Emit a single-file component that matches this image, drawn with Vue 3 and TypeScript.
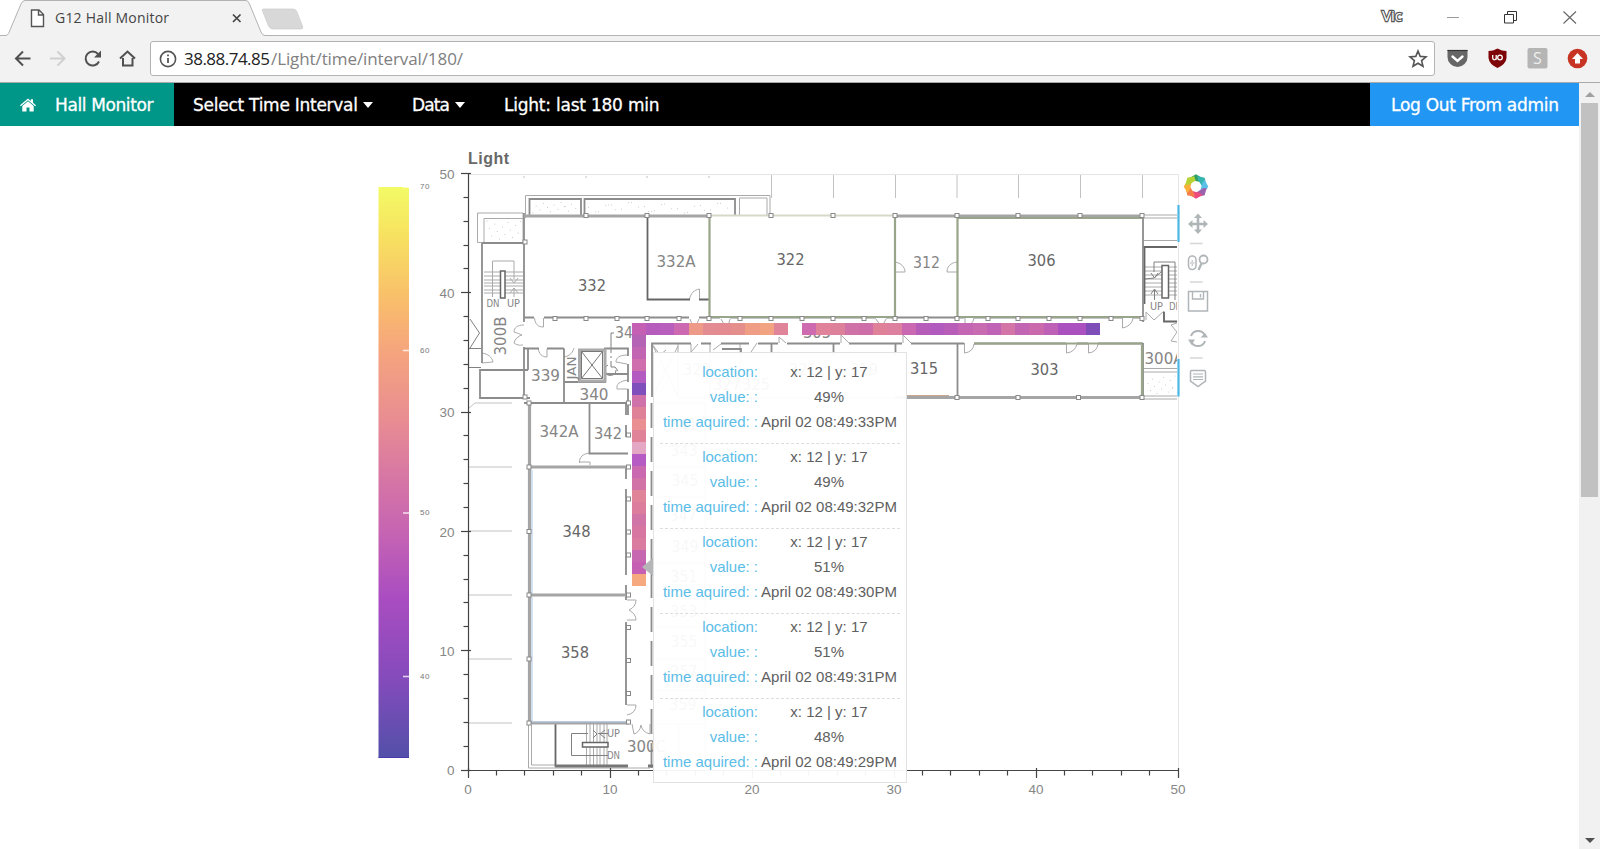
<script setup lang="ts">
interface Reading { value: string; time: string }
interface Cell { x: number; y: number; color: string }
interface Label { text: string; x: number; y: number; w: number; size?: number; rot?: boolean; dark?: boolean }

const px = (v: number): number => 468.5 + v * 14.2
const py = (v: number): number => 770.5 - v * 11.93

const readings: Reading[] = [
  { value: '49%', time: 'April 02 08:49:33PM' },
  { value: '49%', time: 'April 02 08:49:32PM' },
  { value: '51%', time: 'April 02 08:49:30PM' },
  { value: '51%', time: 'April 02 08:49:31PM' },
  { value: '48%', time: 'April 02 08:49:29PM' },
]

const rowLeft = ['#c45fb4', '#b65cbd', '#b85ebd', '#cc69b1', '#ee9a88', '#e38c92', '#e38b90', '#e58f8d', '#ef9d84', '#f1a382', '#e0849a']
const rowRight = ['#ce6bb0', '#df829a', '#dd8099', '#cf72a8', '#ce6ea9', '#df8299', '#dd7f9e', '#ca68b2', '#b65dba', '#b05bbd', '#b85db8', '#c566b4', '#c96bb0', '#c062b5', '#d475a8', '#c266b4', '#ca6aac', '#be60b5', '#ab50bf', '#ab50bf', '#7e4db8']
const column = ['#b463b5', '#c266b3', '#cf6fae', '#b35bc0', '#7f4fbb', '#d072aa', '#df8298', '#ea8f92', '#e08399', '#e5a8c4', '#b55bc3', '#ca68b0', '#d173a7', '#e0849a', '#dc7d9d', '#d175a6', '#d876a2', '#da7c9f', '#c766b1', '#c560b5', '#f6a97f']

const cells: Cell[] = [
  ...rowLeft.map((color, i) => ({ x: 12 + i, y: 37, color })),
  ...rowRight.map((color, i) => ({ x: 24 + i, y: 37, color })),
  ...column.map((color, i) => ({ x: 12, y: 36 - i, color })),
]

const majors = [0, 10, 20, 30, 40, 50]
const minors = Array.from({ length: 26 }, (_, i) => i * 2).filter((v) => v % 10 !== 0)
const scaleTicks = [
  { v: 70, y: 187 },
  { v: 60, y: 350.5 },
  { v: 50, y: 513 },
  { v: 40, y: 676.5 },
]

const labels: Label[] = [
  { text: '332', x: 592, y: 291, w: 28, dark: true },
  { text: '332A', x: 676, y: 266.5, w: 39 },
  { text: '322', x: 790.5, y: 264.5, w: 28, dark: true },
  { text: '312', x: 926.5, y: 268, w: 27 },
  { text: '306', x: 1041.5, y: 265.5, w: 28, dark: true },
  { text: '303', x: 1044.5, y: 374.5, w: 28, dark: true },
  { text: '315', x: 924, y: 373.5, w: 28, dark: true },
  { text: '305', x: 817, y: 337.5, w: 28 },
  { text: '34', x: 624, y: 338, w: 18 },
  { text: '339', x: 545.5, y: 381, w: 29 },
  { text: '340', x: 594, y: 399.5, w: 29 },
  { text: '342A', x: 559, y: 437, w: 39 },
  { text: '342', x: 608, y: 438.5, w: 28 },
  { text: '348', x: 576.5, y: 537, w: 28, dark: true },
  { text: '358', x: 575, y: 658, w: 28, dark: true },
  { text: '300C', x: 646.5, y: 752, w: 39 },
  { text: '300A', x: 1164, y: 363.5, w: 39 },
  { text: '300B', x: 505.5, y: 336, w: 39, rot: true },
  { text: 'JAN', x: 576, y: 368, w: 23, size: 12.5, rot: true },
  { text: 'DN', x: 493, y: 306.5, w: 13, size: 10 },
  { text: 'UP', x: 513.5, y: 306.5, w: 13, size: 10 },
  { text: 'UP', x: 1156.5, y: 310, w: 13, size: 10 },
  { text: 'DN', x: 1175.5, y: 310, w: 13, size: 10 },
  { text: 'UP', x: 613.5, y: 737, w: 13, size: 10 },
  { text: 'DN', x: 613.5, y: 758.5, w: 13, size: 10 },
  { text: '323', x: 697, y: 375, w: 28 },
  { text: '327', x: 727, y: 390, w: 28 },
  { text: '325', x: 756, y: 390, w: 28 },
  { text: '321', x: 803, y: 375, w: 28 },
  { text: '319', x: 864, y: 375, w: 28 },
  { text: '341', x: 684, y: 430, w: 27 },
  { text: '343', x: 684, y: 456, w: 27 },
  { text: '345', x: 685, y: 486, w: 27 },
  { text: '347', x: 683, y: 521, w: 27 },
  { text: '349', x: 685, y: 552, w: 27 },
  { text: '351', x: 684, y: 582, w: 27 },
  { text: '353', x: 684, y: 617, w: 27 },
  { text: '355', x: 684, y: 647, w: 27 },
  { text: '357', x: 684, y: 677, w: 27 },
  { text: '359', x: 683, y: 710, w: 27 },
]

const posts: [number, number][] = [
  ...[586, 647, 709, 771, 833, 895, 957, 1018, 1080, 1142].map((x): [number, number] => [x, 215.5]),
  ...[555, 586, 617, 647, 679, 709, 740, 771, 802, 833, 864, 895, 926, 957, 988, 1018, 1049, 1080, 1111, 1142].map((x): [number, number] => [x, 318.5]),
  ...[957, 1018, 1078.5, 1142].map((x): [number, number] => [x, 397.5]),
  ...[403, 467, 531.5, 595, 659, 723].map((y): [number, number] => [529, y]),
  ...[403, 435, 467, 499, 532, 555, 595, 627.5, 660.5, 693.5, 722].map((y): [number, number] => [628.5, y]),
  [525, 242], [525, 397],
]

const speckles = Array.from({ length: 70 }, (_, i) => {
  const r = (i * 73) % 101 / 101
  const s = (i * 37) % 89 / 89
  if (i % 5 === 0) return { x: 487 + r * 34, y: 221 + s * 19 }
  if (i % 5 === 1) return { x: 532 + r * 46, y: 202 + s * 11 }
  if (i % 5 === 4) return { x: 1147 + r * 29, y: 375 + s * 19 }
  return { x: 587 + r * 145, y: 202 + s * 11 }
})

const petals = ['#2f9e62', '#35b4b0', '#5bc0e8', '#9b62ad', '#ee4a80', '#f47d4a', '#fbb03b', '#b5d334']
</script>

<template>
  <div class="window">
    <div class="titlebar">
      <svg class="tabs" width="320" height="36" viewBox="0 0 320 36">
        <path d="M0 35.5H6C8 35 9 33 10 30L21 4Q22.500 .5 25 .5H246Q248 .5 249.500 4L261 32Q262.500 35.500 265 35.500V36H0Z" fill="#f2f2f2" />
        <path d="M0 35.500H6C8 35 9 33 10 30L21 4Q22.500 .5 25 .5H246Q248 .5 249.500 4L261 32Q262.500 35.500 265 35.500H320" fill="none" stroke="#b3b3b3" />
        <path d="M263 9H293Q296 9 297 12L302.500 26Q303.500 29 301 29H273Q270 29 268.500 26L262.500 11Q262 9 263 9Z" fill="#d8d8d8" stroke="#cdcdcd" stroke-width=".7" />
        <path d="M31.500 10H39L43.500 14.500V26.500H31.500ZM38.500 10V15H43.500" fill="#fff" stroke="#555" stroke-width="1.400" />
        <path d="M233 14.500L240.500 22M240.500 14.500L233 22" stroke="#444" stroke-width="1.700" />
        <text x="55" y="23" textLength="114" class="tabtitle">G12 Hall Monitor</text>
      </svg>
      <svg class="wincontrols" width="220" height="36" viewBox="1380 0 220 36">
        <text x="1382" y="21" textLength="20" lengthAdjust="spacingAndGlyphs" class="profile">Vic</text>
        <path d="M1447 17.500H1459" stroke="#999" />
        <path d="M1504.500 14.500H1513.500V23H1504.500ZM1507.500 14V11.500H1516.500V20.500H1514" fill="none" stroke="#333" />
        <path d="M1563.500 11.500L1576 23.500M1576 11.500L1563.500 23.500" stroke="#666" stroke-width="1.100" />
      </svg>
    </div>

    <div class="toolbar">
      <svg class="navicons" width="150" height="46" viewBox="0 36 150 46">
        <g fill="none" stroke="#505050" stroke-width="2">
          <path d="M30.500 58.500H16M23 51.500L16 58.500L23 65.500" />
          <path d="M50 58.500H64.500M57.500 51.500L64.500 58.500L57.500 65.500" stroke="#d0d0d0" />
          <path d="M98 54A7 7 0 1 0 99 61.500" />
          <path d="M101 50.500V57.500H94Z" fill="#505050" stroke="none" />
          <path d="M120 58.500L127.500 51.500L135 58.500M123 58V65.500H132.500V58" />
        </g>
      </svg>
      <div class="omnibox">
        <svg width="18" height="18" viewBox="0 0 18 18">
          <circle cx="9" cy="9" r="7.600" fill="none" stroke="#555" stroke-width="1.600" />
          <path d="M9 4.500V6.300M9 8V13" stroke="#555" stroke-width="1.800" />
        </svg>
        <svg class="url" width="300" height="30" viewBox="184 44 300 30">
          <text x="184" y="65" textLength="86" class="urltext">38.88.74.85</text>
          <text x="271" y="65" textLength="192" class="urltext path">/Light/time/interval/180/</text>
        </svg>
        <svg class="star" width="20" height="20" viewBox="0 0 20 20">
          <path d="M10 2L12.200 7.400L18 7.800L13.600 11.600L15 17.300L10 14.200L5 17.300L6.400 11.600L2 7.800L7.800 7.400Z" fill="none" stroke="#555" stroke-width="1.600" />
        </svg>
      </div>
      <svg class="exts" width="165" height="46" viewBox="1435 36 165 46">
        <path d="M1447.500 50H1467.500V57A10 10 0 0 1 1447.500 57Z" fill="#666" />
        <path d="M1447.500 50.500H1467.500" stroke="#333" stroke-width="1.200" />
        <path d="M1452.500 56.500L1457.500 61L1462.500 56.500" fill="none" stroke="#fff" stroke-width="2.400" stroke-linecap="round" />
        <path d="M1497.500 48.500Q1502 51 1506.500 51V58Q1506 64 1497.500 68Q1489 64 1488.500 58V51Q1493 51 1497.500 48.500Z" fill="#7e0608" />
        <path d="M1492.700 55V58Q1492.700 59.800 1494.500 59.800Q1496.200 59.800 1496.200 58V55.500M1496.200 59.700V55" fill="none" stroke="#fff" stroke-width="1.300" />
        <circle cx="1500" cy="57.500" r="2.300" fill="none" stroke="#fff" stroke-width="1.300" />
        <rect x="1527.500" y="48" width="20" height="20.500" rx="2" fill="#b5b5b5" />
        <text x="1537.500" y="63.500" text-anchor="middle" class="ext-s">S</text>
        <circle cx="1577.500" cy="58.500" r="9.800" fill="#c73424" />
        <path d="M1577.500 53L1583 59H1580V63.500H1575V59H1572Z" fill="#fff" />
      </svg>
    </div>

    <div class="viewport">
      <main class="page">
        <nav class="navbar">
          <a class="brand">
            <svg width="16" height="14" viewBox="0 0 16 14">
              <path d="M0 7.300L8 .5L10.800 2.900V1.300H13V4.800L16 7.300L15.200 8.200L8 2.200L.8 8.200Z" fill="#fff" />
              <path d="M2.300 8L8 3.300L13.700 8V13.500H9.500V9.500H6.500V13.500H2.300Z" fill="#fff" />
            </svg>
            <svg class="t" width="100" height="30"><text x="0" y="21" textLength="98.500">Hall Monitor</text></svg>
          </a>
          <a class="item first"><svg class="t" width="166" height="30"><text x="0" y="21" textLength="165">Select Time Interval</text></svg><i class="caret" /></a>
          <a class="item data"><svg class="t" width="39" height="30"><text x="0" y="21" textLength="38">Data</text></svg><i class="caret" /></a>
          <a class="item"><svg class="t" width="157" height="30"><text x="0" y="21" textLength="155.500">Light: last 180 min</text></svg></a>
          <a class="logout"><svg class="t" width="169" height="30"><text x="0" y="21" textLength="168">Log Out From admin</text></svg></a>
        </nav>

        <section class="chart">
          <svg class="scale" width="60" height="700" viewBox="378 126 60 700">
            <defs>
              <linearGradient id="plasma" x1="0" y1="0" x2="0" y2="1">
                <stop offset="0" stop-color="#f3fb66" />
                <stop offset=".08" stop-color="#f7e360" />
                <stop offset=".2" stop-color="#f9bd6b" />
                <stop offset=".29" stop-color="#f5a47e" />
                <stop offset=".41" stop-color="#e88c92" />
                <stop offset=".5" stop-color="#d878a3" />
                <stop offset=".6" stop-color="#c765b2" />
                <stop offset=".72" stop-color="#a94dc1" />
                <stop offset=".86" stop-color="#854bbb" />
                <stop offset="1" stop-color="#5250a9" />
              </linearGradient>
            </defs>
            <rect x="378.500" y="187" width="30.500" height="571" fill="url(#plasma)" />
            <path d="M378.500 757.500H409" stroke="#4a3aaa" />
            <g v-for="t in scaleTicks" :key="t.v">
              <path :d="`M403 ${t.y}H409`" stroke="#fff" stroke-opacity=".75" stroke-width="1.600" />
              <text x="420" :y="t.y + 2.400" class="scale-label" textLength="9.500">{{ t.v }}</text>
            </g>
          </svg>

          <div class="plotwrap">
            <svg class="plot" width="747" height="700" viewBox="438 126 747 700">
              <defs>
                <clipPath id="frame"><rect x="469" y="174" width="708" height="596" /></clipPath>
              </defs>
              <text x="468" y="164" class="title" textLength="41">Light</text>
              <path d="M468.500 174.500H1178.500V770" class="outline" />

              <g clip-path="url(#frame)">
                <g class="thin">
                  <path d="M771.500 175V198M833.500 175V198M895.500 175V198M957 175V198M1018.500 175V198M1080.500 175V198M1142.500 175V198M524 176V178M586 176V178M647 176V178M709 176V178" class="faint" />
                  <path d="M469 467H512M469 531H512M469 595H512M469 659H512M469 723H512M469 408L475 403H512" class="faint" />
                  <path d="M525.500 218V195.500H770V216M739.500 215V198H767V215" />
                  <path d="M523 213H477.500V242.500H523M484 242V218.500H523M523 213V243" />
                  <path d="M484 272H523M484 276H523M484 280H523M484 283H523M484 286H523M484 290H523M484 293H523" />
                  <path d="M492.500 297V261H514V279M510 278L514 283L518 278M510 293L514 288L518 293M514 288V297" />
                  <path d="M470 319L479.500 333L470 348M469 348.500H481M469 367.500H481" class="firm" />
                  <path d="M482 353C488 354 492 357 493 362L482 363M524 325C517 325 514 328 514 332C517 333 520 334 522 335C518 336 515 339 514 343C518 346 521 345 523 345" />
                  <path d="M534.500 318C535 324 538 327 543.500 327V318M538 348C539 354 542 357 547 357V349M564 357C570 356 573 352 574 348" />
                  <path d="M628 355C619 355 616 358 616 362L627 364M628 380C620 381 616 384 617 389H628" />
                  <path d="M611 353V333H614" class="firm" />
                  <path d="M689.500 299C691 293 694 290 699.500 289V299M895 262C901 263 905 267 905 272H895M957 262C950 263 947 267 947 272H957" />
                  <path d="M690 319Q692 326 696 326L699 319M721 319L725 326H728L730 319M876 319L880 325H883L886 319M965 318V326Q973 325 974 318M1122.500 318V328Q1132 326 1133 318" />
                  <path d="M964.500 343V353Q973 352 974 344M1066.500 343V353Q1075 352 1077 344M1088.500 343V353Q1097 352 1098 344M1146 320V312L1154 320L1164 311V321M1177 323L1171 325L1177 332L1171 341L1177 342" />
                  <path d="M779 343V337L786 343M841 343V335L849 343M903 343V335L911 343M652 344L660 355L666 350M691 344V352L698 344M713 350L721 344M751 352L757 343" />
                  <path d="M579.500 463C579 457 583 454 589 453M580 462H590V465M627 600H636Q636 607 629 610Q636 614 636 620H627M627 705H636Q636 713 627 715M632 724L634 734Q640 732 641 725Q642 732 650 734V724" />
                  <path d="M1144 240.500H1177M1144 215H1177M1144 218H1177M1144 368.500H1177M1144 372H1177M1144 396H1177M1144 399H1177" />
                  <path d="M1145 267H1177M1145 271H1177M1145 275H1177M1145 279H1177M1145 283H1177M1145 287H1177M1145 291H1177M1145 295H1177" />
                  <path d="M1154 272V262H1175V300M1151 273L1154.500 278L1158 273M1154.500 300V290M1151 294L1154.500 289L1158 294M1145 279L1154 278L1161 272" class="firm" />
                  <path d="M586.500 724V765M590 724V765M593.500 724V765M597 724V765M600 724V765M604 724V765M607 724V765" />
                  <path d="M588 733.500H571.500V755.500H608M593 730L597 734L593 738M605 730L600 734L605 738M598 733.500H608" class="firm" />
                  <path d="M528.500 723V768H650M531.500 725V765H555" />
                  <path d="M705 403V768M679 725V768M653 446H705M653 467H705M653 497H705M653 531H705M653 563H705M653 595H705M653 627H705M653 659H705M653 690H705M653 724H705M653 403H705" />
                  <path d="M653 346L678 396M678 346L653 396M678 344V398H895M710 344V398M740 344V398" />
                  <path d="M608 365A5.500 5.500 0 1 0 616 370M611 361V367H615L618 371M611 356V358" class="firm" />
                </g>

                <g class="wall">
                  <path d="M529.500 216V199H581V216M584.500 216V199H735V216" />
                  <path d="M647.500 217V299.500H690M699 299.500H709" class="dark" />
                  <path d="M482 243V363M524 213V322M524 347V398H480V370H528M523 243H482M528 348V370M482 398H530" />
                  <path d="M523 348.500H539M547 348.500H564M564 348.500V402M564 382H606M606 374H628M604 348.500H628V356M628 364V382M628 389V415M524 403H628" />
                  <path d="M589.500 404V453.500H628M626 404V415M626 425V437M626 489V575M626 467V479M626 585V600M626 622V705" />
                  <path d="M524 317.500H534M544 317.500H689M699 317.500H720M730 317.500H876M886 317.500H964M974 317.500H1122M1133 317.500H1144" />
                  <path d="M652 397V343.500H691M701 343.500H711M721 343.500H749M758 343.500H778M787 343.500H840M849 343.500H902M911 343.500H964M974 343.500H1066M1077 343.500H1088M1098 343.500H1143" />
                  <path d="M722 349H741V355M771.500 343V355M833.500 343V355M895.500 343V355M957.500 343V397M1143 343V400" />
                  <path d="M1143 247H1177M1144.500 247V304M1164 312V321.500H1177M555.500 724V767" class="dark" />
                  <path d="M651.500 403V768" stroke-dasharray="25 9" />
                  <path d="M1143 216V322" />
                </g>

                <g class="double">
                  <path d="M524 216H709M895 216H1143M895 397.500H1143" />
                  <path d="M529.500 403V723M529 467H629M529 595H629M529 723H629" />
                  <path d="M555 766H628M648 766H654" class="firm" />
                </g>
                <g class="green">
                  <path d="M709.500 216V317H895V216M957.500 317V218H1142M957 317H1142M1142 345V396" />
                  <path d="M709 215.500H895" class="pale" />
                  <path d="M974 343.500H1142" />
                </g>
                <path d="M532 470V594M532 597V722H628" fill="none" stroke="#abc4e0" stroke-width="1" />
                <path d="M907 395.500H949" stroke="#c8a68d" />

                <rect x="579.500" y="350" width="25.500" height="31" class="shaft" />
                <path d="M581.500 351.500H602.500V378.500H581.500ZL602.500 378.500M602.500 351.500L581.500 378.500" fill="none" stroke="#777" />
                <rect x="500.500" y="271" width="4.500" height="27" class="stairpost" />
                <rect x="1162" y="265.500" width="6.500" height="32.500" class="stairpost" />
                <rect x="582.500" y="742.500" width="25.500" height="4.500" class="stairpost" />
                <rect v-for="([x, y], i) in posts" :key="i" :x="x - 2" :y="y - 2" width="4" height="4" class="post" />
                <circle v-for="(s, i) in speckles" :key="'s' + i" :cx="s.x" :cy="s.y" r=".5" fill="#bbb" />

                <text
                  v-for="(l, i) in labels" :key="'l' + i" :x="l.x" :y="l.y" :textLength="l.w" lengthAdjust="spacingAndGlyphs"
                  :transform="l.rot ? `rotate(-90 ${l.x} ${l.y})` : undefined"
                  :font-size="l.size ?? 16" class="room" :class="{ strong: l.dark }"
                >{{ l.text }}</text>
              </g>

              <rect
                v-for="(c, i) in cells" :key="'c' + i" :x="px(c.x - 0.5)" :y="py(c.y + 0.5)"
                width="14.200" height="11.930" :fill="c.color" shape-rendering="crispEdges"
              />

              <g class="axis">
                <path d="M468.500 174V770.500M468 770.500H1179" />
                <path v-for="m in majors" :key="'y' + m" :d="`M461 ${Math.round(py(m)) - 0.5}H471`" />
                <path v-for="m in majors" :key="'x' + m" :d="`M${Math.round(px(m)) - 0.5} 768V778`" />
                <path v-for="m in minors" :key="'my' + m" :d="`M463.500 ${Math.round(py(m)) - 0.5}H468`" />
                <path v-for="m in minors" :key="'mx' + m" :d="`M${Math.round(px(m)) - 0.5} 771V775.500`" />
              </g>
              <g class="axis-label">
                <text v-for="m in majors" :key="'ty' + m" x="454.500" :y="py(m) + 4.700" text-anchor="end">{{ m }}</text>
                <text v-for="m in majors" :key="'tx' + m" :x="px(m) - 0.5" y="794" text-anchor="middle">{{ m }}</text>
              </g>
              <path d="M1178.500 205V242M1178.500 359V396.500" stroke="#4cb7e6" stroke-width="2.200" />
            </svg>

            <div class="tooltip">
              <div v-for="(r, i) in readings" :key="i" class="reading">
                <span class="key">location:</span><span class="val">x: 12 | y: 17</span>
                <span class="key">value: :</span><span class="val">{{ r.value }}</span>
                <span class="key">time aquired: :</span><span class="val">{{ r.time }}</span>
              </div>
            </div>
          </div>

          <svg class="tools" width="30" height="260" viewBox="1183 160 30 260">
            <g transform="translate(1196 186.500)">
              <path v-for="(c, i) in petals" :key="c" d="M-6.500 -8.500L0 -12.300L6 -8.500L4 -4.500L-3.600 -6.200Z" :fill="c" :transform="`rotate(${i * 45})`" />
            </g>
            <g fill="none" stroke="#b0b5b8" stroke-width="2">
              <path d="M1190 224H1206M1198 216V232" stroke-width="2.600" />
              <path d="M1194 218L1198 213.500L1202 218ZM1194 229.500L1198 234L1202 229.500ZM1192.500 220L1188 224L1192.500 228ZM1203.500 220L1208 224L1203.500 228Z" fill="#b0b5b8" stroke="none" />
              <path d="M1190 243.500H1202.500M1190 282H1202.500M1190 358H1202.500" stroke="#d6d6d6" stroke-width="1.300" />
              <rect x="1188.500" y="256" width="7.500" height="13.500" rx="3.700" stroke-width="1.500" />
              <path d="M1192.200 260V262M1192.200 264V266M1190 263H1194.500" stroke-width="1" />
              <circle cx="1203.500" cy="259.500" r="4" stroke-width="1.800" />
              <path d="M1201.500 263.500L1198.500 270" stroke-width="2.300" />
              <path d="M1188.500 291.500H1207.500V311H1188.500Z" stroke-width="1.500" />
              <path d="M1192.500 292V299H1203.500V292M1200.500 294V297.500" stroke-width="1.400" />
              <path d="M1191 336A7.500 7.500 0 0 1 1204.500 334.500M1205 341A7.500 7.500 0 0 1 1191.500 342.500" stroke-width="2" />
              <path d="M1200.500 337.500H1208L1205 333ZM1188 339.500H1195L1191.500 345Z" fill="#b0b5b8" stroke="none" />
              <path d="M1191.500 370.500H1204.500Q1205.500 370.500 1205.500 372V381L1198 386.500L1190.500 381V372Q1190.500 370.500 1191.500 370.500Z" stroke-width="1.500" />
              <path d="M1193 374H1203M1193 376.800H1203M1193 379.500H1203" stroke-width="1.200" />
            </g>
          </svg>
        </section>
      </main>
      <div class="scrollbar">
        <i class="arrow up" />
        <i class="thumb" />
        <i class="arrow down" />
      </div>
    </div>
  </div>
</template>

<style>
body { margin: 0; overflow: hidden; }
</style>

<style scoped>
.window { width: 1600px; height: 849px; display: flex; flex-direction: column; background: #fff; font-family: "Liberation Sans", Arial, sans-serif; overflow: hidden; }
svg { display: block; flex: none; }
.titlebar { height: 36px; flex: none; display: flex; justify-content: space-between; background: linear-gradient(#b3b3b3, #b3b3b3) 0 35px / 100% 1px no-repeat #fff; }
.tabtitle { font: 14px "Open Sans", "Noto Sans", sans-serif; fill: #444; }
.profile { font: 15px "Open Sans", sans-serif; fill: #fff; stroke: #555; stroke-width: 2.4px; paint-order: stroke; }
.toolbar { height: 47px; box-sizing: border-box; padding-bottom: 1px; flex: none; display: flex; align-items: center; background: #f2f2f2; border-bottom: 1px solid #aaa; }
.omnibox { width: 1283px; height: 33px; border: 1px solid #b3b3b3; border-radius: 3px; background: #fff; display: flex; align-items: center; box-sizing: content-box; }
.omnibox > svg:first-child { margin-left: 8px; }
.url { margin-left: 7px; }
.urltext { font: 17px "Open Sans", "Noto Sans", sans-serif; fill: #222; }
.urltext.path { fill: #808080; }
.star { margin-left: auto; margin-right: 6px; }
.ext-s { font: 16px "Open Sans", sans-serif; fill: #eee; }
.viewport { flex: 1; display: flex; min-height: 0; }
.page { width: 1579px; overflow: hidden; }
.navbar { height: 43px; box-sizing: border-box; display: flex; background: #000; }
.navbar a { display: flex; align-items: center; }
.navbar .t { font: 17px "DejaVu Sans", Verdana, sans-serif; fill: #fff; stroke: #fff; stroke-width: .3px; overflow: visible; }
.brand { width: 154px; padding-left: 20px; background: #009688; gap: 19px; }
.item { margin-left: 39px; }
.item.first { margin-left: 19px; }
.caret { margin: 0 0 0 4px; border: 5px solid transparent; border-top: 6px solid #fff; border-bottom: 0; }
.logout { margin-left: auto; width: 188px; padding-left: 21px; background: #2196f3; }
.chart { display: flex; margin-left: 378px; }
.scale-label { font-size: 8px; fill: #777; }
.plotwrap { position: relative; }
.plot { overflow: visible; }
.title { font-weight: bold; font-size: 16px; fill: #686868; }
.outline { fill: none; stroke: #e5e5e5; }
.thin path { fill: none; stroke: #aaa; stroke-width: 1px; }
.thin .faint { stroke: #c2c2c2; }
.thin .firm { stroke: #808080; }
.wall path { fill: none; stroke: #8c8c8c; stroke-width: 1.8px; }
.wall .dark { stroke: #666; }
.double path { fill: none; stroke: #a5a5a5; stroke-width: 3.2px; }
.double .firm { stroke: #777; }
.green path { fill: none; stroke: #98a58a; stroke-width: 2.2px; }
.green .pale { stroke: #d5d9c8; stroke-width: 2px; }
.shaft { fill: #fff; stroke: #aaa; stroke-width: 3px; }
.stairpost { fill: #fff; stroke: #666; stroke-width: 1.5px; }
.post { fill: #fff; stroke: #888; stroke-width: 1px; }
.room { font-family: "DejaVu Sans", sans-serif; font-weight: 400; fill: #858585; text-anchor: middle; }
.room.strong { fill: #666; }
.axis path { fill: none; stroke: #444; stroke-width: 1.2px; }
.axis-label { font-size: 13.5px; fill: #868686; }
.tooltip { position: absolute; left: 215px; top: 226px; width: 252px; height: 429px; border: 1px solid #e2e2e2; background: rgba(255, 255, 255, .94); font-size: 15px; }
.tooltip::before { content: ""; position: absolute; left: -12px; top: 205px; border: 9px solid transparent; border-right: 11px solid #b4b6b8; border-left: 0; }
.reading { display: grid; grid-template-columns: 98px 136px; column-gap: 3px; grid-auto-rows: 25px; line-height: 25px; margin: 0 6px; height: 84px; border-bottom: 1px dashed #ddd; white-space: nowrap; }
.reading:first-child { padding-top: 6px; height: 84px; }
.reading:last-child { border-bottom: 0; }
.key { color: #5bbde7; text-align: right; }
.val { color: #606060; text-align: center; display: flex; justify-content: center; }
.tools { margin-top: 34px; margin-left: -2px; }
.scrollbar { width: 21px; background: #f1f1f1; position: relative; display: flex; flex-direction: column; align-items: center; }
.thumb { width: 17px; height: 394px; margin-top: 6px; background: #c1c1c1; }
.arrow { border: 5px solid transparent; width: 0; }
.up { margin-top: 9px; border-top: 0; border-bottom-color: #a0a0a0; }
.down { margin-top: auto; margin-bottom: 6px; border-bottom: 0; border-top-color: #505050; }
</style>
